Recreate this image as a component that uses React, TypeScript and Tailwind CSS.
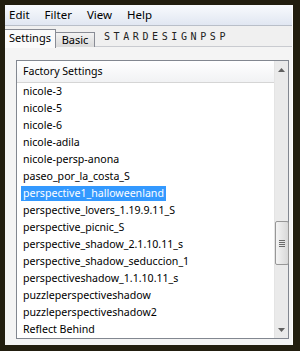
import React from "react";

const items = [
  "nicole-3",
  "nicole-5",
  "nicole-6",
  "nicole-adila",
  "nicole-persp-anona",
  "paseo_por_la_costa_S",
  "perspective1_halloweenland",
  "perspective_lovers_1.19.9.11_S",
  "perspective_picnic_S",
  "perspective_shadow_2.1.10.11_s",
  "perspective_shadow_seduccion_1",
  "perspectiveshadow_1.1.10.11_s",
  "puzzleperspectiveshadow",
  "puzzleperspectiveshadow2",
  "Reflect Behind",
];

export default function App() {
  return (
    <div
      className="w-[300px] h-[351px] bg-[#221e0f] pt-[5px] pl-[5px] pr-[7px] pb-[6px] text-[10.6px] text-black"
      style={{ fontFamily: '"Noto Sans", "Liberation Sans", sans-serif' }}
    >
      <div className="flex flex-col h-full bg-[#f0f0f0] border-r border-[#fdfdfd]">
        {/* menu bar */}
        <div className="h-[21px] flex items-center gap-[15px] pl-[4px] text-[11.5px] bg-gradient-to-b from-[#f8fafd] to-[#e1e7f2] border-b border-[#b9bfc9]">
          <span>Edit</span>
          <span>Filter</span>
          <span>View</span>
          <span>Help</span>
        </div>
        {/* tabs */}
        <div className="h-[22px] flex items-end relative bg-[#f0f0f0]">
          <div className="absolute left-0 right-0 bottom-0 border-b border-[#c9cbd0]" />
          <div className="relative z-10 h-[19px] w-[51px] bg-[#fafafa] border-t border-r border-[#898c95] flex items-center justify-center -mb-px pb-[1px] text-[11px]">
            Settings
          </div>
          <div className="relative h-[15px] w-[40px] -ml-px bg-gradient-to-b from-[#f3f3f3] to-[#d9d9d9] border border-b-0 border-[#898c95] flex items-center justify-center pt-[1px] text-[11px]">
            Basic
          </div>
          <div
            className="ml-[9px] mb-[5px] text-[10px] tracking-[3.6px] leading-none text-[#222]"
            style={{ fontFamily: '"DejaVu Sans Mono", monospace' }}
          >
            STARDESIGNPSP
          </div>
        </div>
        {/* body */}
        <div className="flex-1 pt-[13px] pl-[11px] pr-[3px] pb-[6px] bg-[#f4f4f4]">
          <div className="h-full flex border border-[#828790] bg-white">
            <div className="flex-1 flex flex-col">
              <div className="h-[22px] flex items-center pl-[6px] bg-gradient-to-b from-[#ffffff] to-[#f1f2f4] border-b border-[#d5d5d5]">
                Factory Settings
              </div>
              {items.map((t, i) => (
                <div key={t} className="h-[17px] flex items-center pl-[4px]">
                  <span
                    className={
                      i === 6
                        ? "bg-[#3399ff] text-white px-[2px] leading-[15px]"
                        : "px-[2px] leading-[15px]"
                    }
                  >
                    {t}
                  </span>
                </div>
              ))}
            </div>
            {/* scrollbar */}
            <div className="w-[14px] bg-[#eaeaea] border-l border-[#e4e4e4] flex flex-col items-center">
              <div className="h-[17px] flex items-center justify-center">
                <svg width="7" height="4" viewBox="0 0 7 4">
                  <path d="M0 4 L3.5 0 L7 4 Z" fill="#606060" />
                </svg>
              </div>
              <div className="h-[143px]" />
              <div className="w-[14px] h-[44px] rounded-[2px] border border-[#979797] bg-gradient-to-r from-[#f4f4f4] to-[#d8d8d8] flex flex-col items-center justify-center gap-[1px]">
                <div className="w-[6px] h-px bg-[#6a6a6a]" />
                <div className="w-[6px] h-px bg-[#6a6a6a]" />
                <div className="w-[6px] h-px bg-[#6a6a6a]" />
                <div className="w-[6px] h-px bg-[#6a6a6a]" />
              </div>
              <div className="flex-1" />
              <div className="h-[17px] flex items-center justify-center">
                <svg width="7" height="4" viewBox="0 0 7 4">
                  <path d="M0 0 L3.5 4 L7 0 Z" fill="#606060" />
                </svg>
              </div>
            </div>
          </div>
        </div>
      </div>
    </div>
  );
}
